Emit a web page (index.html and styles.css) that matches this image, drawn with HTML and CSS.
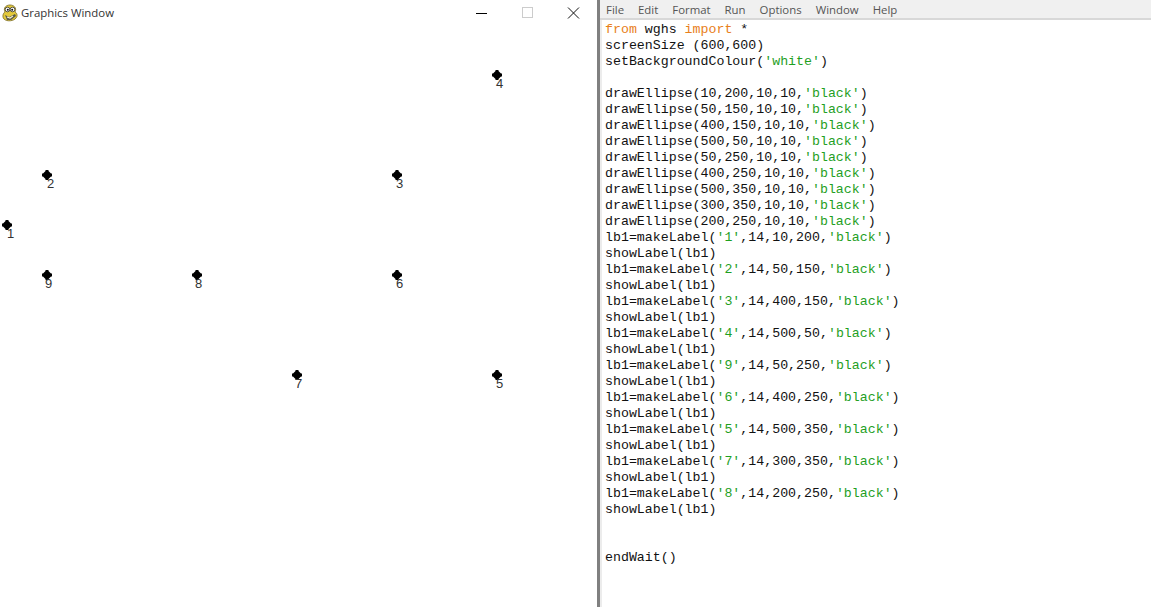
FILE: index.html
```html
<!DOCTYPE html>
<html lang="en">
<head>
<meta charset="utf-8">
<title>Graphics Window</title>
<link rel="stylesheet" href="styles.css">
</head>
<body>
<div class="desktop">
  <section class="graphics">
    <header class="titlebar">
      <svg class="pyicon" width="18" height="18" viewBox="0 0 18 18">
        <path d="M4 8C2 4 5 1 9 1s7 3 5 7c2 1 3 4 1 6-2 3-9 4-12 1-2-2-1-6 1-7z" fill="#e3c93a" stroke="#7a6a22" stroke-width=".8"/>
        <circle cx="6.500" cy="5.500" r="2.300" fill="#fff" stroke="#333" stroke-width=".8"/>
        <circle cx="11.500" cy="5.500" r="2.300" fill="#fff" stroke="#333" stroke-width=".8"/>
        <circle cx="6.800" cy="5.800" r="1" fill="#111"/>
        <circle cx="11.200" cy="5.800" r="1" fill="#111"/>
        <path d="M4 11l4 2 6-3 1 2-5 4H6z" fill="#5a5a48"/>
        <path d="M6 13l3 1 3-2" stroke="#f4f0d0" stroke-width="1.200" fill="none"/>
      </svg>
      <span class="wintitle">Graphics Window</span>
      <div class="controls">
        <svg class="ctl" width="46" height="12" viewBox="0 0 46 12"><path d="M18 6.500h11" stroke="#000" stroke-width="1"/></svg>
        <svg class="ctl" width="46" height="12" viewBox="0 0 46 12"><rect x="18.500" y=".5" width="10" height="10" fill="none" stroke="#ccc"/></svg>
        <svg class="ctl" width="46" height="12" viewBox="0 0 46 12"><path d="M18 .5l11 11M29 .5l-11 11" stroke="#111" stroke-width="1"/></svg>
      </div>
    </header>
    <div class="canvas">
      <i class="dot p1"></i><span class="num n1">1</span>
      <i class="dot p2"></i><span class="num n2">2</span>
      <i class="dot p3"></i><span class="num n3">3</span>
      <i class="dot p4"></i><span class="num n4">4</span>
      <i class="dot p5"></i><span class="num n5">5</span>
      <i class="dot p6"></i><span class="num n6">6</span>
      <i class="dot p7"></i><span class="num n7">7</span>
      <i class="dot p8"></i><span class="num n8">8</span>
      <i class="dot p9"></i><span class="num n9">9</span>
    </div>
  </section>
  <section class="editor">
    <nav class="menubar">
      <span>File</span><span>Edit</span><span>Format</span><span>Run</span><span>Options</span><span>Window</span><span>Help</span>
    </nav>
    <div class="code">
      <div class="line"><span class="kw">from</span> wghs <span class="kw">import</span> *</div>
      <div class="line">screenSize (600,600)</div>
      <div class="line">setBackgroundColour(<span class="st">'white'</span>)</div>
      <div class="line blank"></div>
      <div class="line">drawEllipse(10,200,10,10,<span class="st">'black'</span>)</div>
      <div class="line">drawEllipse(50,150,10,10,<span class="st">'black'</span>)</div>
      <div class="line">drawEllipse(400,150,10,10,<span class="st">'black'</span>)</div>
      <div class="line">drawEllipse(500,50,10,10,<span class="st">'black'</span>)</div>
      <div class="line">drawEllipse(50,250,10,10,<span class="st">'black'</span>)</div>
      <div class="line">drawEllipse(400,250,10,10,<span class="st">'black'</span>)</div>
      <div class="line">drawEllipse(500,350,10,10,<span class="st">'black'</span>)</div>
      <div class="line">drawEllipse(300,350,10,10,<span class="st">'black'</span>)</div>
      <div class="line">drawEllipse(200,250,10,10,<span class="st">'black'</span>)</div>
      <div class="line">lb1=makeLabel(<span class="st">'1'</span>,14,10,200,<span class="st">'black'</span>)</div>
      <div class="line">showLabel(lb1)</div>
      <div class="line">lb1=makeLabel(<span class="st">'2'</span>,14,50,150,<span class="st">'black'</span>)</div>
      <div class="line">showLabel(lb1)</div>
      <div class="line">lb1=makeLabel(<span class="st">'3'</span>,14,400,150,<span class="st">'black'</span>)</div>
      <div class="line">showLabel(lb1)</div>
      <div class="line">lb1=makeLabel(<span class="st">'4'</span>,14,500,50,<span class="st">'black'</span>)</div>
      <div class="line">showLabel(lb1)</div>
      <div class="line">lb1=makeLabel(<span class="st">'9'</span>,14,50,250,<span class="st">'black'</span>)</div>
      <div class="line">showLabel(lb1)</div>
      <div class="line">lb1=makeLabel(<span class="st">'6'</span>,14,400,250,<span class="st">'black'</span>)</div>
      <div class="line">showLabel(lb1)</div>
      <div class="line">lb1=makeLabel(<span class="st">'5'</span>,14,500,350,<span class="st">'black'</span>)</div>
      <div class="line">showLabel(lb1)</div>
      <div class="line">lb1=makeLabel(<span class="st">'7'</span>,14,300,350,<span class="st">'black'</span>)</div>
      <div class="line">showLabel(lb1)</div>
      <div class="line">lb1=makeLabel(<span class="st">'8'</span>,14,200,250,<span class="st">'black'</span>)</div>
      <div class="line">showLabel(lb1)</div>
      <div class="line blank"></div>
      <div class="line blank"></div>
      <div class="line">endWait()</div>
    </div>
  </section>
</div>
</body>
</html>
```
FILE: styles.css
```css
html, body {
  margin: 0;
  padding: 0;
  background: #fff;
  overflow: hidden;
}
.desktop {
  display: flex;
  width: 1151px;
  height: 607px;
}
.graphics {
  width: 597px;
  flex: none;
  display: flex;
  flex-direction: column;
  background: #fff;
}
.titlebar {
  display: flex;
  align-items: center;
  height: 25px;
  flex: none;
}
.pyicon {
  flex: none;
  margin-left: 1px;
}
.wintitle {
  margin-left: 2px;
  font: 11.4px "Open Sans", "Liberation Sans", sans-serif;
  color: #333;
}
.controls {
  margin-left: auto;
  display: flex;
  margin-right: 1px;
}
.ctl {
  display: block;
}
.canvas {
  position: relative;
  flex: 1;
}
.dot {
  position: absolute;
  width: 10px;
  height: 10px;
  background: #000;
  clip-path: polygon(35% 0, 65% 0, 65% 10%, 90% 35%, 100% 35%, 100% 65%, 90% 65%, 65% 90%, 65% 100%, 35% 100%, 35% 90%, 10% 65%, 0 65%, 0 35%, 10% 35%, 35% 10%);
}
.num {
  position: absolute;
  font: 13px/14px "Liberation Sans", sans-serif;
  color: #333;
}
.p1 { left: 2px; top: 195px; }
.p2 { left: 42px; top: 145px; }
.p3 { left: 392px; top: 145px; }
.p4 { left: 492px; top: 45px; }
.p5 { left: 492px; top: 345px; }
.p6 { left: 392px; top: 245px; }
.p7 { left: 292px; top: 345px; }
.p8 { left: 192px; top: 245px; }
.p9 { left: 42px; top: 245px; }
.n1 { left: 7px; top: 202px; }
.n2 { left: 47px; top: 152px; }
.n3 { left: 396px; top: 152px; }
.n4 { left: 496px; top: 52px; }
.n5 { left: 496px; top: 352px; }
.n6 { left: 396px; top: 252px; }
.n7 { left: 295px; top: 352px; }
.n8 { left: 195px; top: 252px; }
.n9 { left: 45px; top: 252px; }
.editor {
  flex: 1;
  display: flex;
  flex-direction: column;
  border-left: 3px solid #808080;
  min-width: 0;
}
.menubar {
  display: flex;
  gap: 14px;
  align-items: center;
  height: 18px;
  padding-left: 6px;
  background: #f0f0f0;
  border-bottom: 2px solid #d8d8d8;
  font: 11.4px "Open Sans", "Liberation Sans", sans-serif;
  color: #555;
  flex: none;
}
.code {
  flex: 1;
  padding: 2px 0 0 3px;
  border-left: 2px solid #ececec;
  font: 13.28px/16px "Liberation Mono", monospace;
  color: #111;
  background: #fff;
}
.line {
  height: 16px;
  white-space: pre;
}
.kw {
  color: #e8801a;
}
.st {
  color: #1fa01f;
}
```
